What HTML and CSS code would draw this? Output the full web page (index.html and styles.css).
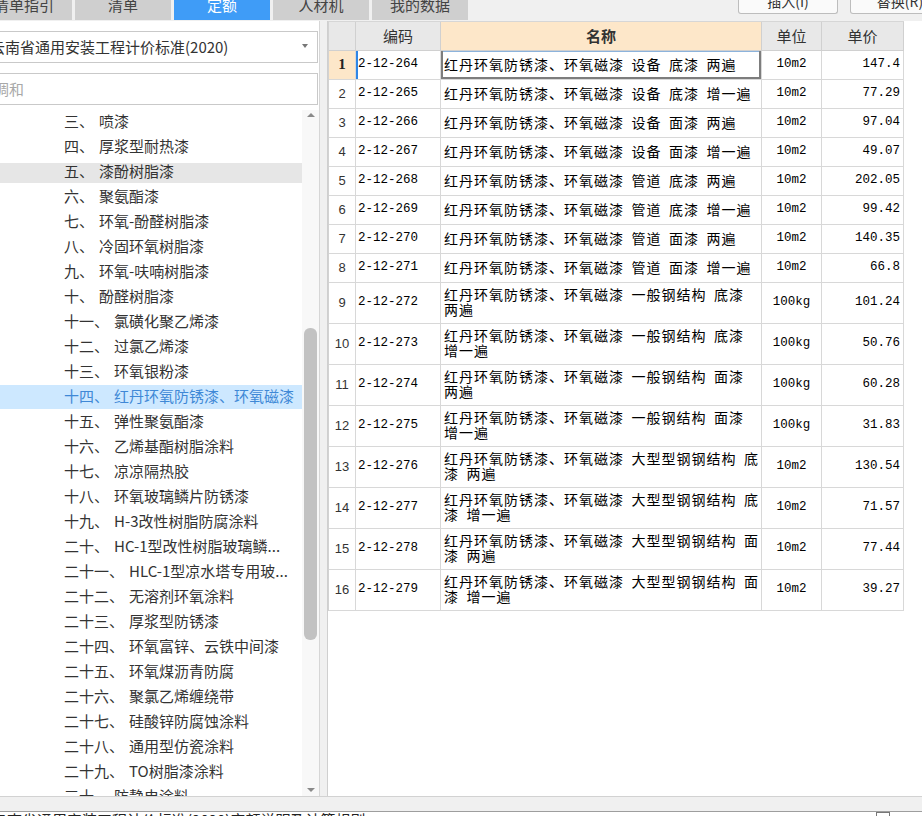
FILE: index.html
```html
<!DOCTYPE html>
<html lang="zh-CN">
<head>
<meta charset="utf-8">
<title>定额</title>
<link rel="stylesheet" href="styles.css">
</head>
<body>
<div class="topbar">
  <div class="tabs">
    <div class="tab">清单指引</div>
    <div class="tab">清单</div>
    <div class="tab active">定额</div>
    <div class="tab">人材机</div>
    <div class="tab">我的数据</div>
  </div>
  <div class="actions">
    <div class="btn">插入(I)</div>
    <div class="btn">替换(R)</div>
  </div>
</div>

<div class="main">
  <div class="left">
    <div class="select">
      <span class="select-text">云南省通用安装工程计价标准(2020)</span>
      <span class="caret"></span>
    </div>
    <div class="search"><span class="placeholder">调和</span></div>
    <div class="tree">
      <div class="tree-list">
        <div class="item"><span>三、</span><span class="t">喷漆</span></div>
        <div class="item"><span>四、</span><span class="t">厚浆型耐热漆</span></div>
        <div class="item hover"><span>五、</span><span class="t">漆酚树脂漆</span></div>
        <div class="item"><span>六、</span><span class="t">聚氨酯漆</span></div>
        <div class="item"><span>七、</span><span class="t">环氧-酚醛树脂漆</span></div>
        <div class="item"><span>八、</span><span class="t">冷固环氧树脂漆</span></div>
        <div class="item"><span>九、</span><span class="t">环氧-呋喃树脂漆</span></div>
        <div class="item"><span>十、</span><span class="t">酚醛树脂漆</span></div>
        <div class="item"><span>十一、</span><span class="t">氯磺化聚乙烯漆</span></div>
        <div class="item"><span>十二、</span><span class="t">过氯乙烯漆</span></div>
        <div class="item"><span>十三、</span><span class="t">环氧银粉漆</span></div>
        <div class="item selected"><span>十四、</span><span class="t">红丹环氧防锈漆、环氧磁漆</span></div>
        <div class="item"><span>十五、</span><span class="t">弹性聚氨酯漆</span></div>
        <div class="item"><span>十六、</span><span class="t">乙烯基酯树脂涂料</span></div>
        <div class="item"><span>十七、</span><span class="t">凉凉隔热胶</span></div>
        <div class="item"><span>十八、</span><span class="t">环氧玻璃鳞片防锈漆</span></div>
        <div class="item"><span>十九、</span><span class="t">H-3改性树脂防腐涂料</span></div>
        <div class="item"><span>二十、</span><span class="t">HC-1型改性树脂玻璃鳞...</span></div>
        <div class="item"><span>二十一、</span><span class="t">HLC-1型凉水塔专用玻...</span></div>
        <div class="item"><span>二十二、</span><span class="t">无溶剂环氧涂料</span></div>
        <div class="item"><span>二十三、</span><span class="t">厚浆型防锈漆</span></div>
        <div class="item"><span>二十四、</span><span class="t">环氧富锌、云铁中间漆</span></div>
        <div class="item"><span>二十五、</span><span class="t">环氧煤沥青防腐</span></div>
        <div class="item"><span>二十六、</span><span class="t">聚氯乙烯缠绕带</span></div>
        <div class="item"><span>二十七、</span><span class="t">硅酸锌防腐蚀涂料</span></div>
        <div class="item"><span>二十八、</span><span class="t">通用型仿瓷涂料</span></div>
        <div class="item"><span>二十九、</span><span class="t">TO树脂漆涂料</span></div>
        <div class="item"><span>三十、</span><span class="t">防静电涂料</span></div>
      </div>
      <div class="scrollbar">
        <div class="sb-btn sb-up"><span class="tri-up"></span></div>
        <div class="sb-track"><div class="sb-thumb"></div></div>
        <div class="sb-btn sb-down"><span class="tri-down"></span></div>
      </div>
    </div>
  </div>

  <div class="splitter"></div>

  <div class="grid">
    <div class="tbl">
      <div class="row head">
        <div class="c"></div>
        <div class="c ctr">编码</div>
        <div class="c ctr hl"><b>名称</b></div>
        <div class="c ctr">单位</div>
        <div class="c ctr">单价</div>
      </div>

      <div class="row h1">
        <div class="c num cur">1</div>
        <div class="c code focus-left">2-12-264</div>
        <div class="c nm focus"><span>红丹环氧防锈漆、环氧磁漆 设备 底漆 两遍</span></div>
        <div class="c unit">10m2</div>
        <div class="c price">147.4</div>
      </div>
      <div class="row h1">
        <div class="c num">2</div>
        <div class="c code">2-12-265</div>
        <div class="c nm"><span>红丹环氧防锈漆、环氧磁漆 设备 底漆 增一遍</span></div>
        <div class="c unit">10m2</div>
        <div class="c price">77.29</div>
      </div>
      <div class="row h1">
        <div class="c num">3</div>
        <div class="c code">2-12-266</div>
        <div class="c nm"><span>红丹环氧防锈漆、环氧磁漆 设备 面漆 两遍</span></div>
        <div class="c unit">10m2</div>
        <div class="c price">97.04</div>
      </div>
      <div class="row h1">
        <div class="c num">4</div>
        <div class="c code">2-12-267</div>
        <div class="c nm"><span>红丹环氧防锈漆、环氧磁漆 设备 面漆 增一遍</span></div>
        <div class="c unit">10m2</div>
        <div class="c price">49.07</div>
      </div>
      <div class="row h1">
        <div class="c num">5</div>
        <div class="c code">2-12-268</div>
        <div class="c nm"><span>红丹环氧防锈漆、环氧磁漆 管道 底漆 两遍</span></div>
        <div class="c unit">10m2</div>
        <div class="c price">202.05</div>
      </div>
      <div class="row h1">
        <div class="c num">6</div>
        <div class="c code">2-12-269</div>
        <div class="c nm"><span>红丹环氧防锈漆、环氧磁漆 管道 底漆 增一遍</span></div>
        <div class="c unit">10m2</div>
        <div class="c price">99.42</div>
      </div>
      <div class="row h1">
        <div class="c num">7</div>
        <div class="c code">2-12-270</div>
        <div class="c nm"><span>红丹环氧防锈漆、环氧磁漆 管道 面漆 两遍</span></div>
        <div class="c unit">10m2</div>
        <div class="c price">140.35</div>
      </div>
      <div class="row h1">
        <div class="c num">8</div>
        <div class="c code">2-12-271</div>
        <div class="c nm"><span>红丹环氧防锈漆、环氧磁漆 管道 面漆 增一遍</span></div>
        <div class="c unit">10m2</div>
        <div class="c price">66.8</div>
      </div>
      <div class="row h2">
        <div class="c num">9</div>
        <div class="c code">2-12-272</div>
        <div class="c nm"><span>红丹环氧防锈漆、环氧磁漆 一般钢结构 底漆 两遍</span></div>
        <div class="c unit">100kg</div>
        <div class="c price">101.24</div>
      </div>
      <div class="row h2">
        <div class="c num">10</div>
        <div class="c code">2-12-273</div>
        <div class="c nm"><span>红丹环氧防锈漆、环氧磁漆 一般钢结构 底漆 增一遍</span></div>
        <div class="c unit">100kg</div>
        <div class="c price">50.76</div>
      </div>
      <div class="row h2">
        <div class="c num">11</div>
        <div class="c code">2-12-274</div>
        <div class="c nm"><span>红丹环氧防锈漆、环氧磁漆 一般钢结构 面漆 两遍</span></div>
        <div class="c unit">100kg</div>
        <div class="c price">60.28</div>
      </div>
      <div class="row h2">
        <div class="c num">12</div>
        <div class="c code">2-12-275</div>
        <div class="c nm"><span>红丹环氧防锈漆、环氧磁漆 一般钢结构 面漆 增一遍</span></div>
        <div class="c unit">100kg</div>
        <div class="c price">31.83</div>
      </div>
      <div class="row h2">
        <div class="c num">13</div>
        <div class="c code">2-12-276</div>
        <div class="c nm"><span>红丹环氧防锈漆、环氧磁漆 大型型钢钢结构 底漆 两遍</span></div>
        <div class="c unit">10m2</div>
        <div class="c price">130.54</div>
      </div>
      <div class="row h2">
        <div class="c num">14</div>
        <div class="c code">2-12-277</div>
        <div class="c nm"><span>红丹环氧防锈漆、环氧磁漆 大型型钢钢结构 底漆 增一遍</span></div>
        <div class="c unit">10m2</div>
        <div class="c price">71.57</div>
      </div>
      <div class="row h2">
        <div class="c num">15</div>
        <div class="c code">2-12-278</div>
        <div class="c nm"><span>红丹环氧防锈漆、环氧磁漆 大型型钢钢结构 面漆 两遍</span></div>
        <div class="c unit">10m2</div>
        <div class="c price">77.44</div>
      </div>
      <div class="row h2">
        <div class="c num">16</div>
        <div class="c code">2-12-279</div>
        <div class="c nm"><span>红丹环氧防锈漆、环氧磁漆 大型型钢钢结构 面漆 增一遍</span></div>
        <div class="c unit">10m2</div>
        <div class="c price">39.27</div>
      </div>
    </div>
  </div>
</div>

<div class="status"></div>
<div class="footer">
  <span class="footer-text">云南省通用安装工程计价标准(2020)定额说明及计算规则</span>
  <span class="footer-box"></span>
</div>
</body>
</html>
```

FILE: styles.css
```css
* { box-sizing: border-box; }

html, body {
  margin: 0;
  padding: 0;
}

body {
  width: 922px;
  height: 816px;
  overflow: hidden;
  background: #f0f0f0;
  font-family: "Noto Sans CJK SC", "Noto Sans", sans-serif;
  color: #333;
}

/* ---------- top tab bar ---------- */
.topbar {
  display: flex;
  align-items: flex-start;
  height: 20px;
  overflow: hidden;
}

.tabs {
  display: flex;
  gap: 3px;
  margin-left: -24px;
}

.tab {
  width: 96px;
  height: 20px;
  background: #cfcfcf;
  color: #444;
  font-size: 15px;
  line-height: 9px;
  text-align: center;
  overflow: hidden;
  white-space: nowrap;
}

.tab.active {
  background: #3f9cf7;
  color: #fff;
}

.actions {
  display: flex;
  gap: 12px;
  margin-left: auto;
  margin-right: -28px;
}

.btn {
  width: 100px;
  height: 14px;
  background: #fafafa;
  border: 1px solid #bdbdbd;
  border-top: none;
  border-radius: 0 0 3px 3px;
  font-size: 14px;
  line-height: 2px;
  text-align: center;
  color: #333;
  overflow: hidden;
  white-space: nowrap;
}

/* ---------- main area ---------- */
.main {
  display: flex;
  height: 775px;
  margin-top: 1px;
}

.left {
  width: 320px;
  background: #fff;
  border-right: 1px solid #d6d6d6;
  display: flex;
  flex-direction: column;
  padding-top: 10px;
  overflow: hidden;
}

.select,
.search {
  height: 32px;
  width: 320px;
  margin-left: -2px;
  border: 1px solid #c9c9c9;
  background: #fff;
  display: flex;
  align-items: center;
  overflow: hidden;
  white-space: nowrap;
  font-size: 15px;
  flex-shrink: 0;
  padding-bottom: 2px;
}

.select-text {
  margin-left: -9px;
  color: #333;
}

.caret {
  margin-left: auto;
  margin-right: 9px;
  width: 0;
  height: 0;
  border-left: 3.5px solid transparent;
  border-right: 3.5px solid transparent;
  border-top: 4px solid #777;
}

.search {
  margin-top: 10px;
}

.placeholder {
  margin-left: -5px;
  color: #a8a8a8;
}

.tree {
  flex: 1;
  display: flex;
  margin-top: 5px;
  min-height: 0;
}

.tree-list {
  flex: 1;
  overflow: hidden;
}

.item {
  height: 25px;
  line-height: 22px;
  padding-left: 64px;
  font-size: 15px;
  color: #333;
  white-space: nowrap;
  overflow: hidden;
}

.item .t {
  margin-left: 5px;
}

.item.hover {
  background: linear-gradient(#fff 0, #fff 3px, #e6e6e6 3px, #e6e6e6 23px, #fff 23px);
}

.item.selected {
  background: linear-gradient(#cde8ff 0, #cde8ff 24px, #fff 24px);
  color: #3f88d6;
}

.scrollbar {
  width: 17px;
  display: flex;
  flex-direction: column;
  background: #f8f8f8;
}

.sb-btn {
  height: 16px;
  display: flex;
  justify-content: center;
}

.sb-up {
  align-items: flex-start;
  padding-top: 3px;
}

.sb-down {
  align-items: flex-end;
  padding-bottom: 4px;
}

.tri-up {
  width: 0;
  height: 0;
  border-left: 4px solid transparent;
  border-right: 4px solid transparent;
  border-bottom: 4px solid #8a8a8a;
}

.tri-down {
  width: 0;
  height: 0;
  border-left: 4px solid transparent;
  border-right: 4px solid transparent;
  border-top: 4px solid #8a8a8a;
}

.sb-track {
  flex: 1;
  padding: 202px 2px 0 2px;
}

.sb-thumb {
  height: 312px;
  background: #c2c2c2;
  border-radius: 6px;
}

.splitter {
  width: 7px;
  background: #f0f0f0;
}

/* ---------- grid ---------- */
.grid {
  flex: 1;
  background: #fff;
  border-left: 1px solid #cfcfcf;
  overflow: hidden;
}

.tbl {
  width: 576px;
  border-left: 1px solid #d2d2d2;
  border-top: 1px solid #d6d6d6;
}

.row {
  display: grid;
  grid-template-columns: 27px 85px 321px 60px 82px;
}

.row.head { height: 29px; }
.row.h1 { height: 29px; }
.row.h2 { height: 41px; }

.c {
  border-right: 1px solid #d8d8d8;
  border-bottom: 1px solid #d8d8d8;
  display: flex;
  align-items: center;
  overflow: hidden;
  white-space: nowrap;
  color: #000;
  padding-bottom: 2px;
}

.head .c {
  background: #e8e8e8;
  border-color: #d0d0d0;
  font-size: 15px;
  color: #333;
}

.head .c.hl {
  background: #fde7c9;
}

.ctr {
  justify-content: center;
}

.num {
  justify-content: center;
  font-family: "Liberation Sans", Arial, sans-serif;
  font-size: 13px;
  color: #333;
}

.num.cur {
  background: #fde7c9;
  font-family: "Liberation Serif", "Times New Roman", serif;
  font-weight: 700;
  font-size: 15px;
  color: #222;
}

.code,
.unit,
.price {
  font-family: "Liberation Mono", "DejaVu Sans Mono", monospace;
  font-size: 12.5px;
}

.code {
  padding-left: 2px;
}

.unit {
  justify-content: center;
}

.price {
  justify-content: flex-end;
  padding-right: 3px;
}

.nm {
  padding-left: 3px;
  font-size: 14px;
  letter-spacing: 1px;
  word-spacing: 3.4px;
  line-height: 15px;
  white-space: normal;
}

.nm span {
  display: block;
  width: 100%;
}

.focus-left {
  box-shadow: inset 2px 0 #2f86e6;
}

.focus {
  box-shadow: inset 2px 0 #7d7d7d, inset -2px 0 #7d7d7d, inset 0 -2px #7d7d7d, inset 0 1px #8cb3dc;
}

/* ---------- bottom ---------- */
.status {
  height: 16px;
  background: #f0f0f0;
  border-top: 1px solid #d2d2d2;
  border-bottom: 1px solid #9e9e9e;
}

.footer {
  height: 5px;
  background: #fff;
  display: flex;
  align-items: flex-start;
  overflow: hidden;
}

.footer-text {
  font-size: 15px;
  line-height: 16px;
  margin-left: -8px;
  color: #222;
  white-space: nowrap;
}

.footer-box {
  margin-left: auto;
  margin-right: 32px;
  width: 14px;
  height: 6px;
  border: 1px solid #777;
  border-bottom: none;
}
```
